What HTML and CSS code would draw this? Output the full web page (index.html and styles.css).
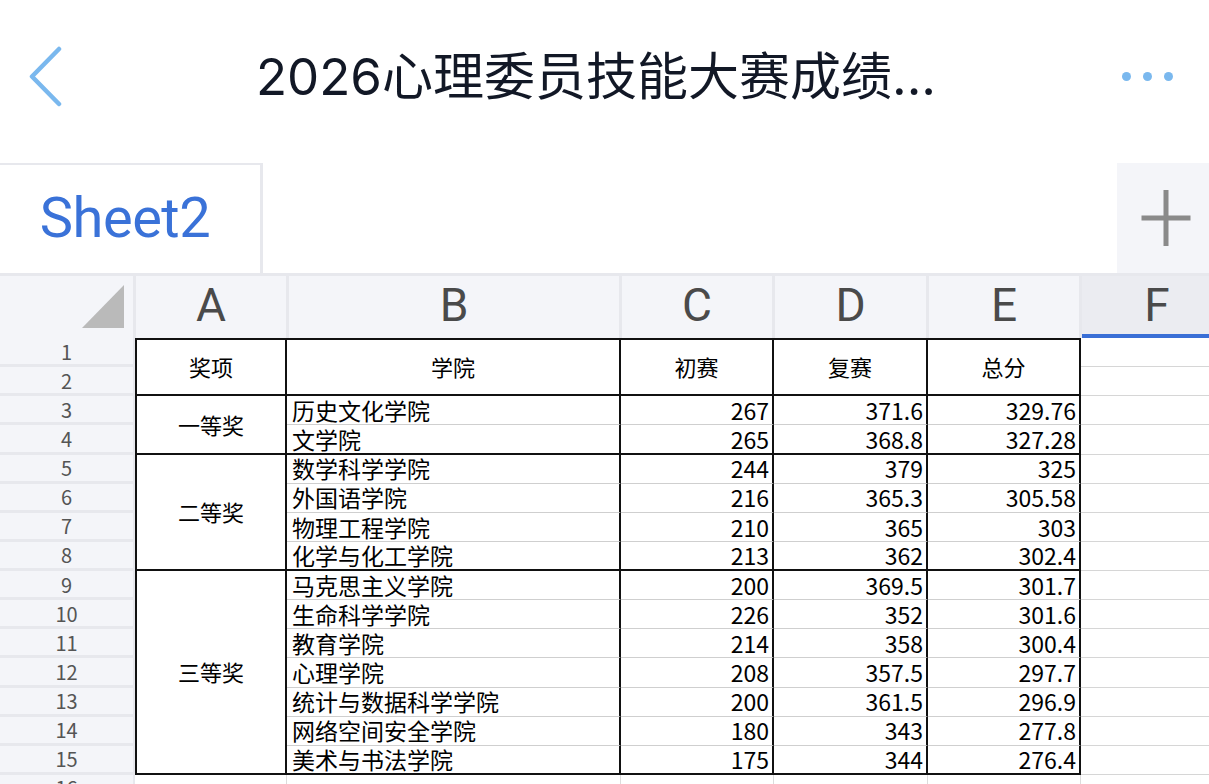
FILE: index.html
```html
<!DOCTYPE html>
<html lang="zh-CN">
<head>
<meta charset="utf-8">
<title>2026心理委员技能大赛成绩</title>
<link rel="stylesheet" href="styles.css">
</head>
<body>
<div class="app">
  <header class="topbar">
    <div class="back">
      <svg width="34" height="63" viewBox="0 0 34 63"><polyline points="31,4 4,31.5 31,59" fill="none" stroke="#7ab8ee" stroke-width="4.5" stroke-linecap="round" stroke-linejoin="round"/></svg>
    </div>
    <h1 class="title">2026心理委员技能大赛成绩...</h1>
    <div class="more"><span class="dot"></span><span class="dot"></span><span class="dot"></span></div>
  </header>

  <div class="tabbar">
    <div class="tab">Sheet2</div>
    <div class="tab-spacer"></div>
    <div class="add">
      <svg width="56" height="56" viewBox="0 0 56 56"><rect x="3.5" y="25.5" width="49" height="5" fill="#8a8a8a"/><rect x="25.5" y="0" width="5" height="56" fill="#8a8a8a"/></svg>
    </div>
  </div>

  <div class="colheads">
    <div class="ch corner"><svg width="42" height="43" viewBox="0 0 42 43"><polygon points="0,43 42,43 42,0" fill="#bababa"/></svg></div>
    <div class="ch ca">A</div>
    <div class="ch cb">B</div>
    <div class="ch cc">C</div>
    <div class="ch cd">D</div>
    <div class="ch ce">E</div>
    <div class="ch cf sel">F</div>
  </div>

  <div class="body">
    <div class="rowheads">
      <div class="rh">1</div><div class="rh">2</div><div class="rh">3</div><div class="rh">4</div>
      <div class="rh">5</div><div class="rh">6</div><div class="rh">7</div><div class="rh">8</div>
      <div class="rh">9</div><div class="rh">10</div><div class="rh">11</div><div class="rh">12</div>
      <div class="rh">13</div><div class="rh">14</div><div class="rh">15</div><div class="rh">16</div>
    </div>
    <div class="sheet">
      <div class="c a head span2">奖项</div>
      <div class="c head span2">学院</div>
      <div class="c head span2">初赛</div>
      <div class="c head span2">复赛</div>
      <div class="c head span2">总分</div>
      <div class="c f"></div>
      <div class="c f"></div>

      <div class="c a grp span2">一等奖</div>
      <div class="c name">历史文化学院</div><div class="c num">267</div><div class="c num">371.6</div><div class="c num">329.76</div><div class="c f"></div>
      <div class="c name end">文学院</div><div class="c num end">265</div><div class="c num end">368.8</div><div class="c num end">327.28</div><div class="c f"></div>

      <div class="c a grp span4">二等奖</div>
      <div class="c name">数学科学学院</div><div class="c num">244</div><div class="c num">379</div><div class="c num">325</div><div class="c f"></div>
      <div class="c name">外国语学院</div><div class="c num">216</div><div class="c num">365.3</div><div class="c num">305.58</div><div class="c f"></div>
      <div class="c name">物理工程学院</div><div class="c num">210</div><div class="c num">365</div><div class="c num">303</div><div class="c f"></div>
      <div class="c name end">化学与化工学院</div><div class="c num end">213</div><div class="c num end">362</div><div class="c num end">302.4</div><div class="c f"></div>

      <div class="c a grp span7">三等奖</div>
      <div class="c name">马克思主义学院</div><div class="c num">200</div><div class="c num">369.5</div><div class="c num">301.7</div><div class="c f"></div>
      <div class="c name">生命科学学院</div><div class="c num">226</div><div class="c num">352</div><div class="c num">301.6</div><div class="c f"></div>
      <div class="c name">教育学院</div><div class="c num">214</div><div class="c num">358</div><div class="c num">300.4</div><div class="c f"></div>
      <div class="c name">心理学院</div><div class="c num">208</div><div class="c num">357.5</div><div class="c num">297.7</div><div class="c f"></div>
      <div class="c name">统计与数据科学学院</div><div class="c num">200</div><div class="c num">361.5</div><div class="c num">296.9</div><div class="c f"></div>
      <div class="c name">网络空间安全学院</div><div class="c num">180</div><div class="c num">343</div><div class="c num">277.8</div><div class="c f"></div>
      <div class="c name end">美术与书法学院</div><div class="c num end">175</div><div class="c num end">344</div><div class="c num end">276.4</div><div class="c f"></div>

      <div class="c blank"></div><div class="c blank"></div><div class="c blank"></div><div class="c blank"></div><div class="c blank"></div><div class="c f"></div>
    </div>
  </div>
</div>
</body>
</html>
```

FILE: styles.css
```css
* { box-sizing: border-box; }
html, body { margin: 0; padding: 0; background: #fff; }
body { width: 1209px; height: 784px; overflow: hidden; font-family: "Noto Sans CJK SC", "Noto Sans", sans-serif; }
.app { width: 1209px; height: 784px; display: flex; flex-direction: column; overflow: hidden; }

.topbar { height: 152px; display: flex; align-items: center; flex: none; }
.back { width: 96px; height: 100%; display: flex; align-items: center; padding-left: 28px; flex: none; }
.back svg { display: block; }
.title { flex: 1; margin: 0; text-align: center; font-family: Inter, "Noto Sans CJK SC", sans-serif; font-weight: 400; font-size: 51px; line-height: 1.2; color: #121826; white-space: nowrap; padding-top: 2px; }
.more { width: 113px; flex: none; display: flex; align-items: center; gap: 12px; padding-left: 26px; }
.dot { width: 9px; height: 9px; border-radius: 50%; background: #7ab8ee; display: block; }

.tabbar { margin-top: 11px; height: 110px; display: flex; flex: none; }
.tab { width: 263px; height: 110px; border-top: 2px solid #e7e8ed; border-right: 3px solid #e7e8ed; display: flex; align-items: center; justify-content: center; padding-right: 10px; font-family: Roboto, "Noto Sans", sans-serif; font-size: 56px; line-height: 1.2; color: #3a72d8; letter-spacing: -0.5px; }
.tab-spacer { flex: 1; }
.add { width: 92px; height: 110px; background: #f4f5f9; display: flex; align-items: center; padding-left: 21px; }
.add svg { display: block; }

.colheads { height: 65px; flex: none; display: flex; gap: 3px; padding-top: 3px; background: #e7e8ed; overflow: hidden; }
.ch { height: 62px; flex: none; background: #f4f5f9; display: flex; align-items: center; justify-content: center; font-family: Roboto, sans-serif; font-size: 46px; line-height: 1.1; color: #4a4a4a; padding-bottom: 4px; }
.corner { width: 133px; justify-content: flex-end; align-items: flex-end; padding: 0 9px 10px 0; }
.corner svg { display: block; }
.ca { width: 150px; }
.cb { width: 330px; }
.cc { width: 150px; }
.cd { width: 151px; }
.ce { width: 150px; }
.cf { width: 150px; }
.sel { background: #ebecf1; border-bottom: 4px solid #3a6fd6; padding-bottom: 0; }

.body { flex: 1; display: flex; background: #e7e8ed; overflow: hidden; }
.rowheads { width: 133px; flex: none; margin-right: 2px; display: flex; flex-direction: column; }
.rh { height: 29.13px; flex: none; background: #f4f5f9; border-bottom: 3px solid #e7e8ed; display: flex; align-items: center; justify-content: center; font-size: 20px; line-height: 1.2; color: #555; padding-top: 1px; }

.sheet { flex: 1; background: #fff; display: grid; grid-template-columns: 152px 334px 153px 154px 153px 1fr; grid-auto-rows: 29.13px; align-content: start; }
.c { display: flex; align-items: center; font-size: 23px; line-height: 1.15; color: #000; border-right: 2px solid #111; border-bottom: 1px solid #cfcfcf; white-space: nowrap; }
.a { border-left: 2px solid #111; }
.head { justify-content: center; font-size: 22px; border-top: 2px solid #111; border-bottom: 2px solid #111; }
.span2 { grid-row: span 2; }
.span4 { grid-row: span 4; }
.span7 { grid-row: span 7; }
.grp { justify-content: center; font-size: 22px; border-bottom: 2px solid #111; }
.name { padding-left: 5px; }
.num { justify-content: flex-end; padding-right: 3px; }
.end { border-bottom: 2px solid #111; }
.f { border-right: none; border-bottom: 1px solid #d6d6d6; }
.blank { border-right: 1px solid #dcdcdc; border-bottom: 1px solid #dcdcdc; }
.blank:first-child { border-left: 1px solid #dcdcdc; }
```
